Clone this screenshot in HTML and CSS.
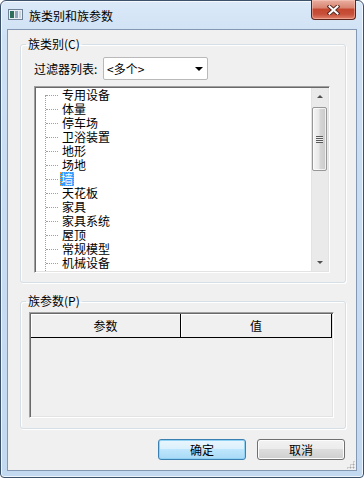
FILE: index.html
```html
<!DOCTYPE html>
<html lang="zh-CN">
<head>
    <meta charset="UTF-8">
    <meta name="viewport" content="width=device-width, initial-scale=1.0">
    <title>族类别和族参数</title>
    <link rel="stylesheet" href="styles.css">
</head>
<body>
    <div class="window">
        <div class="titlebar">
            <svg class="app-icon" width="15" height="11" viewBox="0 0 15 11">
                <rect x="0.5" y="0.5" width="14" height="10" fill="#e8eef4" stroke="#6f8196"/>
                <rect x="2" y="2" width="4" height="7" fill="#2f6f5a"/>
                <rect x="7" y="2" width="3" height="7" fill="#8fa6bd"/>
                <rect x="11" y="2" width="2" height="7" fill="#c9d4df"/>
            </svg>
            <span class="title">族类别和族参数</span>
            <button class="close-btn" type="button">
                <svg width="13" height="10" viewBox="0 0 13 10">
                    <path d="M2.5 1.5 L10.5 8.5 M10.5 1.5 L2.5 8.5" stroke="#5b2a22" stroke-width="4" stroke-linecap="square"/>
                    <path d="M2.5 1.5 L10.5 8.5 M10.5 1.5 L2.5 8.5" stroke="#ffffff" stroke-width="2" stroke-linecap="square"/>
                </svg>
            </button>
        </div>

        <div class="client">
            <fieldset class="group group-category">
                <legend>族类别(C)</legend>
                <div class="filter-row">
                    <label class="filter-label">过滤器列表:</label>
                    <div class="combo">
                        <span class="combo-text">&lt;多个&gt;</span>
                        <span class="combo-arrow"></span>
                    </div>
                </div>
                <div class="listbox">
                    <ul class="tree">
                        <li>专用设备</li>
                        <li>体量</li>
                        <li>停车场</li>
                        <li>卫浴装置</li>
                        <li>地形</li>
                        <li>场地</li>
                        <li><span class="selected">墙</span></li>
                        <li>天花板</li>
                        <li>家具</li>
                        <li>家具系统</li>
                        <li>屋顶</li>
                        <li>常规模型</li>
                        <li>机械设备</li>
                    </ul>
                    <div class="scrollbar">
                        <div class="sb-btn"><span class="arrow-up"></span></div>
                        <div class="sb-track">
                            <div class="sb-thumb"><span class="grip"></span></div>
                        </div>
                        <div class="sb-btn"><span class="arrow-down"></span></div>
                    </div>
                </div>
            </fieldset>

            <fieldset class="group group-params">
                <legend>族参数(P)</legend>
                <div class="param-table">
                    <div class="param-head">
                        <div class="head-cell head-name">参数</div>
                        <div class="head-cell head-value">值</div>
                    </div>
                </div>
            </fieldset>

            <div class="buttons">
                <button class="btn btn-default" type="button">确定</button>
                <button class="btn" type="button">取消</button>
            </div>

            <div class="size-grip"></div>
        </div>
    </div>
</body>
</html>
```

FILE: styles.css
```css
* {
    box-sizing: border-box;
}
body {
    margin: 0;
    font-family: "Noto Sans CJK SC", "Liberation Sans", sans-serif;
    font-size: 12px;
    color: #000;
    background: #ffffff;
}
.window {
    width: 364px;
    height: 478px;
    border: 1px solid #3c526b;
    border-radius: 6px 6px 4px 4px;
    padding: 0 6px 6px 6px;
    background: linear-gradient(180deg, #dbe9f8 0%, #cde0f4 40px, #c3d9f0 100%);
    box-shadow: inset 0 0 0 1px rgba(255, 255, 255, 0.7);
    display: flex;
    flex-direction: column;
}
.titlebar {
    height: 28px;
    display: flex;
    align-items: flex-start;
}
.app-icon {
    margin: 8px 0 0 1px;
}
.title {
    margin: 8px 0 0 6px;
    line-height: 14px;
    font-size: 12px;
}
.close-btn {
    margin: -1px 1px 0 auto;
    width: 45px;
    height: 20px;
    padding: 0;
    border: 1px solid #5e2319;
    border-top: none;
    border-radius: 0 0 4px 4px;
    background: linear-gradient(180deg, #eab0a2 0%, #d98572 40%, #c5472f 50%, #c7503a 75%, #e0826d 100%);
    box-shadow: inset 0 0 0 1px rgba(255, 210, 200, 0.45);
    display: flex;
    align-items: center;
    justify-content: center;
}
.client {
    position: relative;
    height: 442px;
    border: 1px solid #8498b3;
    background: #f0f0f0;
    padding: 7px 10px 0 12px;
    display: flex;
    flex-direction: column;
}
.group {
    margin: 0;
    min-width: 0;
    border: 1px solid #d5dfe5;
    border-radius: 3px;
    box-shadow: inset 1px 1px 0 #ffffff, 1px 1px 0 #ffffff;
}
.group legend {
    padding: 0 2px;
    line-height: 14px;
    font-size: 12px;
}
.group-category {
    padding: 6px 15px 9px 13px;
}
.group-category legend {
    margin-left: -8px;
}
.group-params {
    margin-top: 11px;
    padding: 4px 11px 10px 8px;
}
.group-params legend {
    margin-left: -3px;
}
.filter-row {
    display: flex;
    align-items: center;
    height: 23px;
}
.filter-label {
    width: 69px;
    line-height: 14px;
}
.combo {
    width: 105px;
    height: 23px;
    border: 1px solid #b9b9b9;
    border-radius: 2px;
    background: #ffffff;
    display: flex;
    align-items: center;
    padding: 0 4px 0 3px;
}
.combo-text {
    flex: 1;
    line-height: 14px;
}
.combo-arrow {
    width: 0;
    height: 0;
    border-left: 4px solid transparent;
    border-right: 4px solid transparent;
    border-top: 4px solid #000;
    margin-top: 1px;
}
.listbox {
    margin-top: 6px;
    height: 187px;
    border: 1px solid;
    border-color: #a0a0a0 #ffffff #ffffff #a0a0a0;
    box-shadow: inset 1px 1px 0 #696969, inset -1px -1px 0 #e3e3e3;
    padding: 1px;
    background: #ffffff;
    display: flex;
}
.tree {
    position: relative;
    flex: 1;
    margin: 0;
    padding: 0;
    list-style: none;
}
.tree::before {
    content: "";
    position: absolute;
    left: 9px;
    top: 7px;
    bottom: 0;
    border-left: 1px dotted #a0a0a0;
}
.tree li {
    position: relative;
    height: 14px;
    line-height: 14px;
    padding-left: 26px;
    white-space: nowrap;
}
.tree li::before {
    content: "";
    position: absolute;
    left: 10px;
    top: 7px;
    width: 12px;
    border-top: 1px dotted #a0a0a0;
}
.selected {
    display: inline-block;
    margin-left: -2px;
    padding: 0 1px;
    background: #3399ff;
    color: #ffffff;
    outline: 1px dotted #f09a30;
    outline-offset: -1px;
}
.scrollbar {
    width: 17px;
    display: flex;
    flex-direction: column;
    background: #eaeaea;
    border-left: 1px solid #e3e3e3;
}
.sb-btn {
    height: 17px;
    display: flex;
    align-items: center;
    justify-content: center;
}
.arrow-up,
.arrow-down {
    width: 0;
    height: 0;
    border-left: 3px solid transparent;
    border-right: 3px solid transparent;
}
.arrow-up {
    border-bottom: 3px solid #505050;
}
.arrow-down {
    border-top: 3px solid #505050;
}
.sb-track {
    flex: 1;
    padding: 2px 0 0 0;
}
.sb-thumb {
    height: 64px;
    margin: 0 1px 0 0;
    border: 1px solid #979797;
    border-radius: 2px;
    background: linear-gradient(90deg, #f5f5f5 0%, #e8e8e8 45%, #d6d6d6 55%, #cacaca 100%);
    box-shadow: inset 0 0 0 1px rgba(255, 255, 255, 0.7);
    display: flex;
    align-items: center;
    justify-content: center;
}
.grip {
    width: 7px;
    height: 7px;
    background: repeating-linear-gradient(180deg, #5a5a5a 0, #5a5a5a 1px, #eeeeee 1px, #eeeeee 2px);
}
.param-table {
    height: 106px;
    border: 1px solid;
    border-color: #a0a0a0 #ffffff #ffffff #a0a0a0;
    box-shadow: inset 1px 1px 0 #696969, inset -1px -1px 0 #e3e3e3;
    padding: 1px;
    background: #f0f0f0;
}
.param-head {
    display: flex;
    height: 24px;
}
.head-cell {
    border-right: 1px solid #000;
    border-bottom: 1px solid #000;
    box-shadow: inset 1px 1px 0 #ffffff;
    text-align: center;
    line-height: 23px;
}
.head-name {
    width: 150px;
}
.head-value {
    width: 151px;
}
.buttons {
    margin-top: 10px;
    display: flex;
    justify-content: flex-end;
    gap: 11px;
    padding-right: 1px;
}
.btn {
    width: 88px;
    height: 21px;
    padding: 0;
    font-family: inherit;
    font-size: 12px;
    line-height: 19px;
    color: #000;
    border: 1px solid #707070;
    border-radius: 3px;
    background: linear-gradient(180deg, #f2f2f2 0%, #ebebeb 50%, #dddddd 50%, #cfcfcf 100%);
    box-shadow: inset 0 0 0 1px #fcfcfc;
}
.btn-default {
    border-color: #3c7fb1;
    background: linear-gradient(180deg, #eaf6fd 0%, #d9f0fc 50%, #bee6fd 50%, #a7d9f5 100%);
    box-shadow: inset 0 0 0 1px #8fd2f3;
}
.size-grip {
    position: absolute;
    right: 1px;
    bottom: 1px;
    width: 9px;
    height: 9px;
    background: radial-gradient(circle, #a8a8a8 0.9px, transparent 1.1px) 0 0 / 3px 3px;
    clip-path: polygon(100% 0, 100% 100%, 0 100%);
}
```
